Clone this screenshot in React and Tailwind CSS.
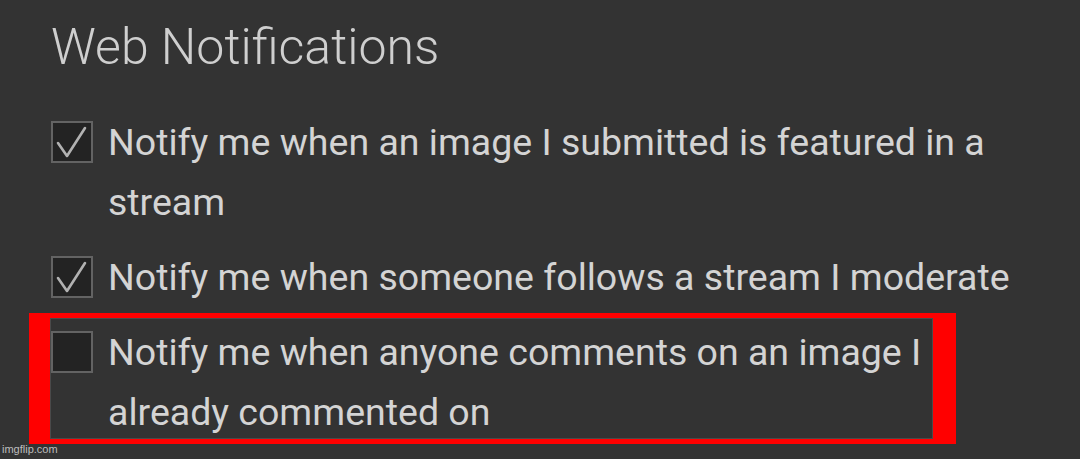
const items = [
    { label: "Notify me when an image I submitted is featured in a stream", checked: true },
    { label: "Notify me when someone follows a stream I moderate", checked: true },
    { label: "Notify me when anyone comments on an image I already commented on", checked: false, marked: true },
];

function Box({ checked }) {
    return (
        <div className="mt-[9px] h-[42px] w-[42px] shrink-0 border-2 border-[#636363] bg-[#232323]">
            {checked && (
                <svg viewBox="0 0 38 38" className="h-full w-full" fill="none">
                    <path d="M5 20 L14 33 L32 5" stroke="#b2b2b2" strokeWidth="2.6" strokeLinecap="round" strokeLinejoin="round" />
                </svg>
            )}
        </div>
    );
}

export default function App() {
    return (
        <div className="relative h-[459px] w-[1080px] overflow-hidden bg-[#333333] font-['Roboto',sans-serif] text-[#d4d4d4]">
            <div className="pl-[51px] pt-[22px]">
                <h1 className="text-[50px] font-light leading-[50px] text-[#cfcfcf]">Web Notifications</h1>

                <div className="mt-[40px] flex flex-col gap-[15px]">
                    {items.map((item) => (
                        <div key={item.label} className="relative flex gap-[15px]">
                            {item.marked && (
                                <div className="pointer-events-none absolute -left-[22px] -top-[9px] h-[131px] w-[927px] border-y-[5px] border-l-[21px] border-r-[23px] border-[#ff0000]">
                                    <div className="h-full w-full border border-[#4a4a4a]" />
                                </div>
                            )}
                            <Box checked={item.checked} />
                            <p className="max-w-[920px] text-[37.5px] leading-[60px]">{item.label}</p>
                        </div>
                    ))}
                </div>
            </div>

            <span className="absolute bottom-[2px] left-[2px] font-['Liberation_Sans',sans-serif] text-[11px] text-[#bdbdbd]">imgflip.com</span>
        </div>
    );
}
